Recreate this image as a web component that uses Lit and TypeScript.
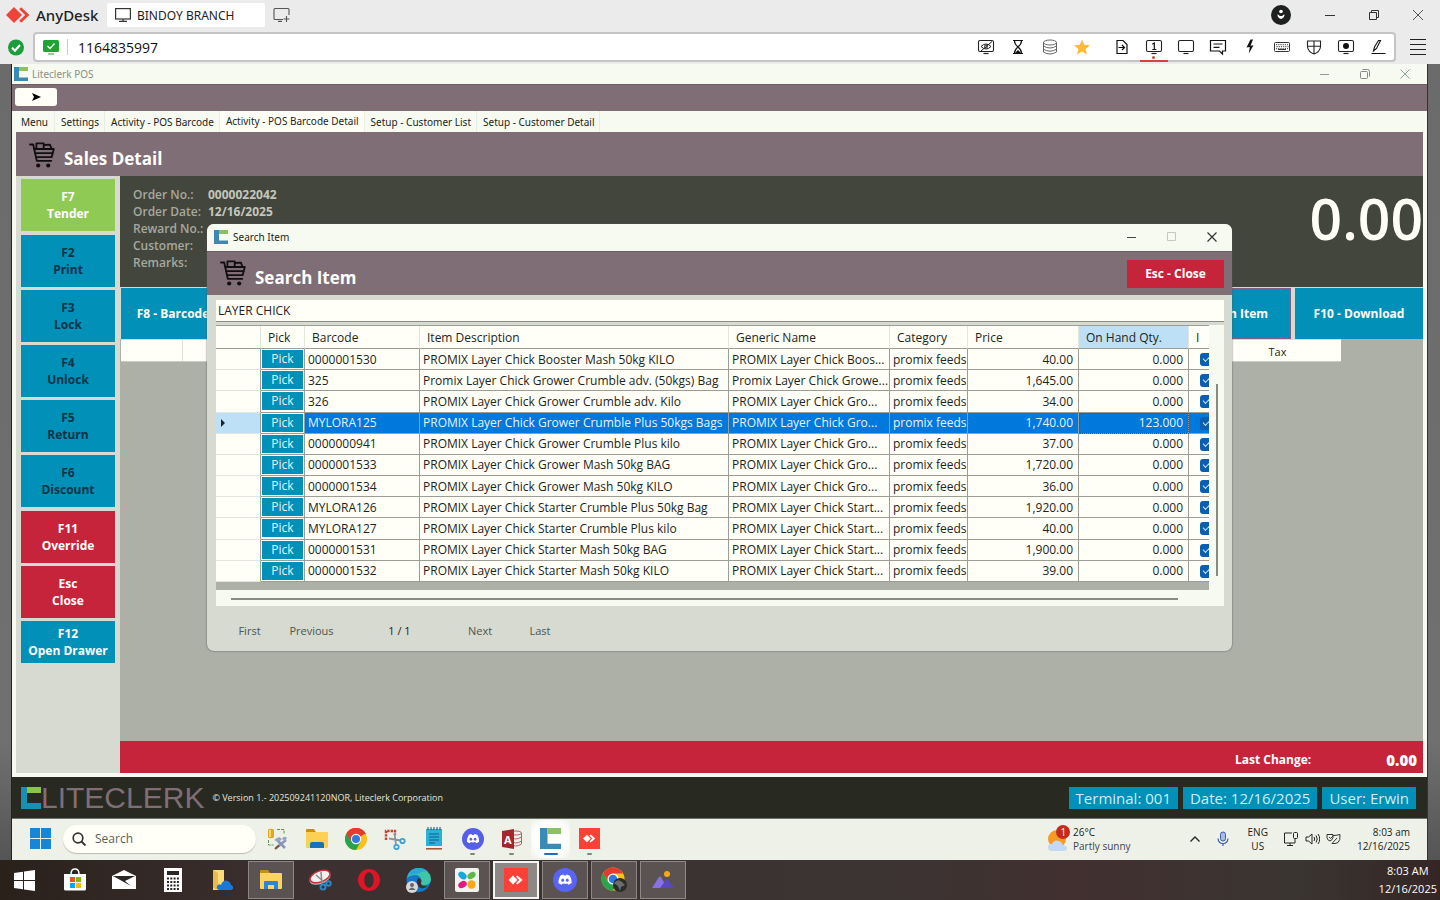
import { LitElement, html, css, svg, nothing } from "lit";
import type { TemplateResult } from "lit";
import { customElement, state } from "lit/decorators.js";
import { classMap } from "lit/directives/class-map.js";

const icon = (w: number, h: number, body: TemplateResult, box = `0 0 ${w} ${h}`) =>
  html`<svg width=${w} height=${h} viewBox=${box} fill="none" aria-hidden="true">${body}</svg>`;

/* ---------- shared marks ---------- */
const anydeskMark = icon(24, 18, svg`<path d="M8 1l8 8-8 8-8-8z" fill="#ef443b"/><path d="M13.2 3.2l2-2L23.4 9l-8.2 7.8-2-2L19.2 9z" fill="#ef443b"/>`);
const liteclerk = (s: number) => icon(s, s, svg`<path d="M0 0h5v14H0z" fill="#3b8ab4"/><path d="M5 0h9v4H5z" fill="#8dc063"/><path d="M0 10.5h14V14H0z" fill="#3b8ab4"/>`, "0 0 14 14");
const cart = icon(26, 27, svg`<g stroke="#120d0f" stroke-width="1.8" stroke-linejoin="round" stroke-linecap="round">
  <path d="M1 2.5h3.2l3.6 16.300h14.500"/><path d="M5.400 7h19.400l-2.200 8.200H7.300"/><path d="M6.500 11.200h17"/>
  <path d="M7.400 6.600V1.300h7.300v5.300M14.700 3l6.200-.4 1.600 4"/></g>
  <circle cx="9.200" cy="23.500" r="2.100" fill="#120d0f"/><circle cx="19.200" cy="23.500" r="2.100" fill="#120d0f"/>`);
const discord = (s: number, bg: string) => icon(s, s, svg`<circle cx="12" cy="12" r="12" fill=${bg}/>
  <path d="M7.2 7.7q1.6-.9 3.2-1.1l.5.9h2.2l.5-.9q1.600.2 3.200 1.100 2.200 3.400 1.900 7.300-1.600 1.300-3.500 1.700l-.8-1.300q-2.400.6-4.800 0l-.8 1.300q-1.900-.4-3.500-1.700-.3-3.900 2.100-7.300z" fill="#fff"/>
  <ellipse cx="9.700" cy="12.200" rx="1.400" ry="1.600" fill=${bg}/><ellipse cx="14.300" cy="12.200" rx="1.400" ry="1.600" fill=${bg}/>`, "0 0 24 24");
const chrome = (s: number) => icon(s, s, svg`<circle cx="12" cy="12" r="12" fill="#fbc116"/>
  <path d="M12 12L1.600 6A12 12 0 0 1 22.400 6z" fill="#e33b2e"/><path d="M1.600 6A12 12 0 0 0 12 24l5-9-5-3z" fill="#2ba24c"/>
  <path d="M12 6.500h10.700A12 12 0 0 0 1.600 6l5 8.500z" fill="#e33b2e"/><circle cx="12" cy="12" r="5.600" fill="#fff"/><circle cx="12" cy="12" r="4.400" fill="#3178e0"/>`, "0 0 24 24");
const anydeskTile = (s: number) => icon(s, s, svg`<path d="M0 0h24v24H0z" fill="#fb4136"/><path d="M9 7.600l4.400 4.400L9 16.400 4.600 12z" fill="#fff"/><path d="M12 8.800l1.400-1.400L18.600 12l-5.200 4.600-1.400-1.400 3.300-3.200z" fill="#fff"/>`, "0 0 24 24");
const folder = icon(24, 22, svg`<path d="M1 2q0-1 1-1h7l2 3H1z" fill="#c98e16"/><path d="M1 4h21q1 0 1 1v14q0 1-1 1H2q-1 0-1-1z" fill="#fcd464"/>
  <path d="M5 20v-7q0-1 1-1h12q1 0 1 1v7h-4v-4H9v4z" fill="#2c86d8"/>`);
const folderSolid = icon(24, 22, svg`<path d="M1 2q0-1 1-1h7l2 3H1z" fill="#c98e16"/><path d="M1 4h21q1 0 1 1v14q0 1-1 1H2q-1 0-1-1z" fill="#fcd055"/>
  <path d="M5 20v-4q0-2 2-2h10q2 0 2 2v4z" fill="#1673b8"/>`);

/* ---------- client toolbar ---------- */
const monitor = (inner: TemplateResult | typeof nothing) =>
  icon(18, 18, svg`<rect x="1.500" y="2.500" width="15" height="11" rx="1.500" stroke="#222" stroke-width="1.100"/><path d="M6.500 15.500h5" stroke="#222" stroke-width="1.200"/>${inner}`);
const toolsA: [string, TemplateResult][] = [
  ["Privacy mode", monitor(svg`<path d="M4 8.500q5-5 10 0-5 5-10 0zM4 13L15 3.500" stroke="#222"/><circle cx="9" cy="8.500" r="1.500" stroke="#222"/>`)],
  ["Session time", icon(18, 18, svg`<path d="M4 2.500h10M4 15.500h10M5.500 2.500q-.2 3.500 3.500 6.500-3.700 3-3.500 6.500M12.500 2.500q.2 3.500-3.500 6.500 3.700 3 3.500 6.500" stroke="#111" stroke-width="1.200"/><path d="M5.500 15.500L9 12l3.500 3.500z" fill="#111"/>`)],
  ["Bandwidth", icon(18, 18, svg`<g stroke="#666"><ellipse cx="9" cy="4.500" rx="6.500" ry="2.500"/><path d="M2.500 4.500v9.500q6.500 4 13 0V4.500M2.500 8q6.500 4 13 0M2.500 11.200q6.500 4 13 0"/></g>`)],
  ["Favorite", icon(18, 18, svg`<path d="M9 1.500l2.200 5.200 5.700.5-4.300 3.700 1.300 5.500L9 13.500l-4.900 2.900 1.300-5.500L1.100 7.200l5.700-.5z" fill="#fdbb2f"/>`)],
];
const toolsB: [string, TemplateResult][] = [
  ["File transfer", icon(18, 18, svg`<path d="M4 2.500h6l4 4v9H4z" stroke="#111" stroke-width="1.200"/><path d="M5.500 9.500h6M9 7l2.500 2.500L9 12" stroke="#111" stroke-width="1.200"/>`)],
  ["Display 1", monitor(svg`<path d="M7.300 6.300L9.300 5v6.500M7.300 11.500h4" stroke="#111" stroke-width="1.200"/>`)],
  ["Display", monitor(nothing)],
  ["Chat", icon(18, 18, svg`<path d="M1.500 2.500h15v10.500h-3v3l-3-3h-9z" stroke="#111" stroke-width="1.200"/><path d="M4.500 6h9M4.500 9.300h6" stroke="#111" stroke-width="1.200"/>`)],
  ["Actions", icon(18, 18, svg`<path d="M9.500 1.500L5.500 9.500l3.300-.6-1 6.600L12.500 7.300l-3 .4 2.500-6.200z" fill="#111"/>`)],
  ["Keyboard", icon(18, 18, svg`<rect x="1.500" y="4.500" width="15" height="9" rx="1" stroke="#333"/><path d="M3 6.700h12M3.500 8.700h12M3 10.700h12" stroke="#333" stroke-dasharray="1.200 1"/><path d="M5 11.500h8" stroke="#333"/>`)],
  ["Permissions", icon(18, 18, svg`<path d="M2.500 3h13v6q-.8 5-6.500 7-5.700-2-6.500-7zM9 3v13M2.500 8.200h13" stroke="#222" stroke-width="1.100"/>`)],
  ["Recording", monitor(svg`<circle cx="9" cy="8" r="3" fill="#111"/>`)],
  ["Whiteboard", icon(18, 18, svg`<path d="M2.500 15.500h14M4.500 13l1-4L9.500 2.500h2L7.500 10.500z" stroke="#111" stroke-width="1.100"/>`)],
];

/* ---------- data ---------- */
const rows: [string, string, string, string, string][] = [
  ["0000001530", "PROMIX Layer Chick Booster Mash 50kg KILO", "PROMIX Layer Chick Boos...", "40.00", "0.000"],
  ["325", "Promix Layer Chick Grower Crumble adv. (50kgs) Bag", "Promix Layer Chick Growe...", "1,645.00", "0.000"],
  ["326", "PROMIX Layer Chick Grower Crumble adv. Kilo", "PROMIX Layer Chick Gro...", "34.00", "0.000"],
  ["MYLORA125", "PROMIX Layer Chick Grower Crumble Plus 50kgs Bags", "PROMIX Layer Chick Gro...", "1,740.00", "123.000"],
  ["0000000941", "PROMIX Layer Chick Grower Crumble Plus kilo", "PROMIX Layer Chick Gro...", "37.00", "0.000"],
  ["0000001533", "PROMIX Layer Chick Grower Mash 50kg BAG", "PROMIX Layer Chick Gro...", "1,720.00", "0.000"],
  ["0000001534", "PROMIX Layer Chick Grower Mash 50kg KILO", "PROMIX Layer Chick Gro...", "36.00", "0.000"],
  ["MYLORA126", "PROMIX Layer Chick Starter Crumble Plus 50kg Bag", "PROMIX Layer Chick Start...", "1,920.00", "0.000"],
  ["MYLORA127", "PROMIX Layer Chick Starter Crumble Plus kilo", "PROMIX Layer Chick Start...", "40.00", "0.000"],
  ["0000001531", "PROMIX Layer Chick Starter Mash 50kg BAG", "PROMIX Layer Chick Start...", "1,900.00", "0.000"],
  ["0000001532", "PROMIX Layer Chick Starter Mash 50kg KILO", "PROMIX Layer Chick Start...", "39.00", "0.000"],
];

const fontBase = css`
  :host { font-family: "Open Sans", "Noto Sans", sans-serif; box-sizing: border-box; }
  *, *::before { box-sizing: border-box; }
  button { font: inherit; color: inherit; border: 0; padding: 0; background: none; display: flex; align-items: center; justify-content: center; }
  svg { display: block; flex: none; }
`;

@customElement("client-bar")
class ClientBar extends LitElement {
  static styles = [fontBase, css`
    :host { display: block; background: #ebebeb; color: #222; }
    .title { display: flex; align-items: center; height: 32px; padding: 0 0 2px 6px; }
    .brand { font-family: "Noto Sans", sans-serif; font-size: 15px; font-weight: 500; margin: 0 11px 0 6px; width: 60px; white-space: nowrap; }
    .title .tab { justify-content: flex-start; gap: 6px; width: 158px; height: 24px; padding-left: 8px; background: #fff; border-radius: 2px; font-family: "Noto Sans", sans-serif; font-size: 12px; white-space: nowrap; }
    .new { margin-left: 8px; }
    .user { margin-left: auto; }
    .win { display: flex; margin-left: 17px; }
    .win button { width: 44px; height: 30px; }
    .addr { display: flex; align-items: center; padding: 0 0 2px 8px; height: 32px; gap: 8px; }
    .box { flex: 1; display: flex; align-items: center; height: 30px; background: #fff; border: 2px solid #c4c4c4; border-radius: 4px; padding-left: 8px; }
    .sep { width: 1px; height: 16px; background: #ccc; margin: 0 6px 0 8px; }
    .box input { flex: 1; min-width: 0; border: 0; outline: 0; background: none; font: inherit; font-size: 14px; color: #111; padding: 0 4px; }
    .tools { display: flex; }
    .tools button { width: 32px; height: 26px; position: relative; }
    .gap { width: 8px; }
    .on::after { content: ""; position: absolute; left: 2px; right: 2px; bottom: -2px; height: 2px; background: #d9423c; }
    .on::before { content: ""; position: absolute; left: 14px; bottom: 1px; width: 3px; height: 3px; border-radius: 2px; background: #d9423c; }
    .menu { width: 28px; margin-right: 8px; }
  `];
  render() {
    return html`
      <header class="title">
        ${anydeskMark}<span class="brand">AnyDesk</span>
        <button class="tab">${icon(16, 16, svg`<rect x=".6" y="1.600" width="14.800" height="10.400" stroke="#333" stroke-width="1.200"/><path d="M4 14.400h8M8 12v2" stroke="#333" stroke-width="1.200"/>`)}BINDOY BRANCH</button>
        <button class="new" aria-label="New tab">${icon(17, 16, svg`<path d="M10 12.500H2q-1 0-1-1V2.500q0-1 1-1h13q1 0 1 1V8M5 14.400h4M13.500 9v6M10.500 12h6" stroke="#555" stroke-width="1.100"/>`)}</button>
        <button class="user" aria-label="Account">${icon(20, 20, svg`<circle cx="10" cy="10" r="10" fill="#1f2020"/><circle cx="10" cy="6.500" r="1.800" fill="#fff"/><path d="M6.500 9.500q1.300 0 1.600 1 1.900 1.200 3.800 0 .3-1 1.600-1 .2 3-3.500 4.500-3.700-1.500-3.500-4.500z" fill="#fff"/>`)}</button>
        <div class="win">
          <button aria-label="Minimize">${icon(12, 12, svg`<path d="M1 6.500h10" stroke="#333"/>`)}</button>
          <button aria-label="Restore">${icon(12, 12, svg`<path d="M1.500 3.500h7v7h-7zM3.500 3.500v-2h7v7h-2" stroke="#333"/>`)}</button>
          <button aria-label="Close">${icon(12, 12, svg`<path d="M1 1l10 10M11 1L1 11" stroke="#555"/>`)}</button>
        </div>
      </header>
      <div class="addr">
        ${icon(17, 17, svg`<circle cx="8" cy="8.500" r="8" fill="#1c9c3c"/><path d="M4 8.700l3 3 5-5.700" stroke="#fff" stroke-width="2.200"/>`)}
        <div class="box">
          ${icon(16, 15, svg`<rect width="16" height="12" rx="1.500" fill="#20a336"/><path d="M5 14h6" stroke="#20a336"/><path d="M4.500 6l2.500 2.500 4.500-5" stroke="#fff" stroke-width="1.300"/>`)}
          <span class="sep"></span>
          <input aria-label="Remote address" value="1164835997" />
          <div class="tools">
            ${toolsA.map(([n, i]) => html`<button aria-label=${n}>${i}</button>`)}
            <span class="gap"></span>
            ${toolsB.map(([n, i]) => html`<button aria-label=${n} class=${classMap({ on: n === "Display 1" })}>${i}</button>`)}
          </div>
        </div>
        <button class="menu" aria-label="Menu">${icon(16, 18, svg`<path d="M0 1.500h16M0 6.500h16M0 11.500h16M0 16.500h16" stroke="#222"/>`)}</button>
      </div>`;
  }
}

@customElement("search-dialog")
class SearchDialog extends LitElement {
  @state() current = 3;
  static styles = [fontBase, css`
    :host { display: block; background: #d6dad0; border-radius: 7px; overflow: hidden; box-shadow: 0 0 2px #555; color: #1c2420; font-size: 12px; }
    .bar { display: flex; align-items: center; height: 27px; background: #f6faf0; padding: 0 0 2px 7px; font-family: "Noto Sans", sans-serif; font-size: 10px; gap: 5px; }
    .win { display: flex; margin-left: auto; }
    .win button { width: 40px; height: 24px; }
    .head { display: flex; align-items: center; height: 44px; background: #7f6e75; padding: 0 8px 0 13px; border-top: 1px solid #6d5d64; }
    h2 { margin: 8px 0 0 9px; font-size: 17px; line-height: 24px; color: #fff; font-weight: 700; }
    .esc { margin-left: auto; width: 97px; height: 28px; background: #c5243a; color: #fff; font-weight: 700; }
    .body { padding: 5px 8px 0 9px; }
    .query { display: block; width: 100%; height: 22px; border: 0; border-bottom: 1px solid #8b8e85; outline: 0; background: #fffff8; font: inherit; color: #222; padding: 0 2px; margin-bottom: 3px; border-radius: 0; }
    .view { display: flex; background: #f6faf0; }
    .clip { flex: 1; min-width: 0; overflow: hidden; background: #acb0a6; padding-bottom: 8px; }
    table { width: calc(100% + 20px); height: 257px; border-spacing: 0; table-layout: fixed; background: #fffff8; border-top: 1px solid #9b9e95; }
    th { height: 23px; font-weight: 400; text-align: left; padding: 0 7px; border-right: 1px solid #e4e6dc; border-bottom: 1px solid #9b9e95; }
    td { padding: 1px 0 0 3px; border-right: 1px solid #9b9e95; border-bottom: 1px solid #9b9e95; white-space: nowrap; overflow: hidden; text-overflow: ellipsis; line-height: 18px; }
    td.num { text-align: right; padding-right: 5px; }
    td.lead { padding-left: 4px; border-bottom-color: #e4e6dc; }
    th.hot { background: #bde0f7; }
    td.pick { padding: 1px; }
    .pick button { width: 100%; height: 18px; background: #0090b8; color: #e4f6fa; }
    tr.sel td { background: #0078dc; color: #e8f4ff; }
    tr.sel td.lead { background: #bde0f7; }
    tr.sel td.pick { background: #fffff8; }
    tr.sel td.focus { outline: 1px dotted #6b4a2a; outline-offset: -1px; }
    input[type="checkbox"] { appearance: none; display: block; width: 13px; height: 13px; margin: 0 0 0 8px; border-radius: 3px; background: #0a5fb0; position: relative; }
    input[type="checkbox"]::before { content: ""; position: absolute; left: 3px; top: 3px; width: 7px; height: 4px; border: solid #cfe6fa; border-width: 0 0 1px 1px; transform: rotate(-45deg); }
    .vs { width: 15px; display: flex; justify-content: center; padding: 59px 0 14px; }
    .vs::before { content: ""; width: 2px; background: #868a7f; }
    .hs { height: 16px; background: #f6faf0; padding: 8px 46px 0 15px; }
    .hs::before { content: ""; display: block; height: 2px; background: #868a7f; }
    .pager { display: flex; align-items: center; height: 45px; padding: 5px 0 2px 22px; font-size: 11px; color: #4d5650; }
    .pager > * { text-align: center; }
    .pager .a { width: 41px; } .pager .b { width: 83px; } .pager .c { width: 93px; color: #1c2420; } .pager .d { width: 68px; } .pager .e { width: 52px; }
  `];
  render() {
    return html`
      <div class="bar">${liteclerk(14)}<span>Search Item</span>
        <div class="win">
          <button aria-label="Minimize">${icon(10, 10, svg`<path d="M0 5.500h9" stroke="#444"/>`)}</button>
          <button aria-label="Maximize">${icon(10, 10, svg`<path d="M.5.5h8v8h-8z" stroke="#c4c8be"/>`)}</button>
          <button aria-label="Close">${icon(10, 10, svg`<path d="M.5.5l9 9M9.500.5l-9 9" stroke="#333" stroke-width="1.200"/>`)}</button>
        </div>
      </div>
      <div class="head">${cart}<h2>Search Item</h2><button class="esc">Esc - Close</button></div>
      <div class="body">
        <input class="query" aria-label="Search" value="LAYER CHICK" />
        <div class="view">
          <div class="clip">
            <table>
              <colgroup><col style="width:45px"><col style="width:44px"><col style="width:115px"><col><col style="width:161px"><col style="width:78px"><col style="width:111px"><col style="width:110px"><col style="width:40px"></colgroup>
              <thead><tr><th></th><th>Pick</th><th>Barcode</th><th>Item Description</th><th>Generic Name</th><th>Category</th><th>Price</th><th class="hot">On Hand Qty.</th><th>I</th></tr></thead>
              <tbody>${rows.map((r, i) => html`
                <tr class=${classMap({ sel: i === this.current })} @click=${() => { this.current = i; }}>
                  <td class="lead">${i === this.current ? icon(6, 8, svg`<path d="M1 0l4 4-4 4z" fill="#222"/>`) : nothing}</td>
                  <td class="pick"><button>Pick</button></td>
                  <td>${r[0]}</td><td>${r[1]}</td><td>${r[2]}</td><td>promix feeds</td>
                  <td class="num">${r[3]}</td><td class="num focus">${r[4]}</td>
                  <td><input type="checkbox" checked aria-label="Inventory item" /></td>
                </tr>`)}</tbody>
            </table>
          </div>
          <div class="vs"></div>
        </div>
        <div class="hs"></div>
      </div>
      <div class="pager"><button class="a">First</button><button class="b">Previous</button><span class="c">1 / 1</span><button class="d">Next</button><button class="e">Last</button></div>`;
  }
}

const remoteApps: { name: string; art: TemplateResult; run?: boolean; on?: boolean }[] = [
  { name: "Database tools", art: icon(22, 22, svg`<path d="M1 1.500q3-1.500 6 0v8q-3 1.500-6 0z" fill="#e0a820"/><path d="M3 2v7" stroke="#fbe690" stroke-width="1.500"/><path d="M10 1.500h7v4M1.500 12v5h5" stroke="#5a9a50" stroke-dasharray="3 1"/><path d="M9 11l9 9M9 20l10-8" stroke="#8a94b8" stroke-width="2.500"/><path d="M7 12l5-3 3 2-3 3zM15 11q2-4 5-1l-2 3z" fill="#9aa4c4"/><path d="M8 21l4-3.500" stroke="#7a5a3a" stroke-width="2"/>`) },
  { name: "File Explorer", art: folderSolid },
  { name: "Chrome", art: chrome(22) },
  { name: "Snip", art: icon(22, 22, svg`<path d="M2 12V3h9v4" stroke="#c8402a" stroke-width="2.400" stroke-dasharray="2.400 1"/><path d="M5 10.500l12 2M10.500 5l1.500 12" stroke="#8a969c" stroke-width="1.800"/><circle cx="18.500" cy="13" r="2.200" stroke="#3ba0d8" stroke-width="1.800"/><circle cx="12.500" cy="19" r="2.200" stroke="#3ba0d8" stroke-width="1.800"/>`) },
  { name: "Notepad", art: icon(18, 23, svg`<path d="M1 2h16v17H1z" fill="#2bb0d8"/><path d="M1 19h16v2H1z" fill="#e8f0f0"/><path d="M1 21.800h16" stroke="#a05030" stroke-width="1.500"/><path d="M3 0v3M6 0v3M9 0v3M12 0v3M15 0v3" stroke="#1a4c68"/><path d="M4 7h10M4 10h10M4 13h10M4 16h6" stroke="#0a6088" stroke-width="1.200"/>`) },
  { name: "Discord", art: discord(22, "#5560e6"), run: true },
  { name: "Access", art: html`<svg width="22" height="22" viewBox="0 0 22 22" fill="none" aria-hidden="true"><ellipse cx="15" cy="5" rx="5.500" ry="2" stroke="#b8606a"/><path d="M9.500 5v11q5 4 11 0V5M9.500 9q5 4 11 0M9.500 13q5 4 11 0" stroke="#b8606a"/><path d="M1 3l12-2v20L1 19z" fill="#a4262c"/><text x="3" y="15.500" font-size="11" font-weight="700" fill="#fff">A</text></svg>`, run: true },
  { name: "Liteclerk", art: liteclerk(21), run: true, on: true },
  { name: "AnyDesk", art: anydeskTile(21), run: true },
];

@customElement("remote-taskbar")
class RemoteTaskbar extends LitElement {
  static styles = [fontBase, css`
    :host { display: flex; align-items: center; height: 42px; background: #eef1e8; border-top: 1px solid #6f726a; padding: 0 17px 2px 18px; color: #222; font-size: 10px; line-height: 14px; }
    .search { display: flex; align-items: center; gap: 9px; width: 193px; height: 28px; margin: 0 2px 0 12px; padding-left: 9px; background: #fffff8; border-radius: 14px; box-shadow: 0 1px 1px #b8bcb2; }
    .search input { width: 120px; border: 0; outline: 0; background: none; padding: 0; font: inherit; font-size: 12px; }
    .search input::placeholder { color: #5c605a; opacity: 1; }
    .app { width: 39px; height: 38px; position: relative; }
    .app.on { background: radial-gradient(#fff 60%, #eef1e8); }
    .app.run::after { content: ""; position: absolute; bottom: 3px; width: 5px; height: 2px; border-radius: 1px; background: #83867e; }
    .app.on::after { width: 14px; background: #1a70c0; }
    .weather { display: flex; align-items: center; gap: 2px; margin-left: auto; }
    .wt { color: #444; } .wt b { display: block; font-weight: 400; color: #222; }
    .up { margin-left: 58px; } .mic { margin-left: 15px; }
    .lang { margin: 0 15px 0 18px; text-align: center; }
    .sys { display: flex; align-items: center; gap: 6px; }
    .clock { text-align: right; margin-left: 16px; }
  `];
  render() {
    return html`
      <button aria-label="Start">${icon(21, 21, svg`<path d="M0 0h10v10H0zM11 0h10v10H11zM0 11h10v10H0zM11 11h10v10H11z" fill="#1687d8"/>`)}</button>
      <label class="search">${icon(14, 14, svg`<circle cx="6" cy="6" r="4.800" stroke="#333" stroke-width="1.700"/><path d="M9.500 9.500l4 4" stroke="#333" stroke-width="1.900"/>`)}<input aria-label="Search" placeholder="Search" /></label>
      ${remoteApps.map((a) => html`<button aria-label=${a.name} class=${classMap({ app: true, run: !!a.run, on: !!a.on })}>${a.art}</button>`)}
      <div class="weather">
        <svg width="24" height="28" viewBox="0 0 24 28" fill="none" aria-hidden="true"><circle cx="10" cy="14" r="9" fill="#f59a22"/><path d="M4 26q-4-1-3-5 2-3 4-2 2-5 7-3 3 1 4 4 5 1 4 4-1 2-3 2z" fill="#c4d8f6"/><circle cx="16" cy="7" r="7" fill="#c42b1c"/><text x="13.500" y="11" font-size="10" fill="#fff">1</text></svg>
        <span class="wt"><b>26°C</b>Partly sunny</span>
      </div>
      <button class="up" aria-label="Hidden icons">${icon(12, 8, svg`<path d="M1.500 6.500L6 2l4.500 4.500" stroke="#222" stroke-width="1.300"/>`)}</button>
      <button class="mic" aria-label="Microphone">${icon(14, 16, svg`<rect x="4.500" y="1" width="5" height="9" rx="2.500" fill="#a8bce8" stroke="#3a5ca8"/><path d="M2 7.500q.5 5 5 5t5-5M7 12.500V15" stroke="#3a5ca8" stroke-width="1.200"/>`)}</button>
      <div class="lang">ENG<br />US</div>
      <div class="sys">
        ${icon(16, 16, svg`<path d="M9 2H1.500v10H12V8M4 14.500h6M7 12v2.500" stroke="#222"/><rect x="10.500" y="1.500" width="4" height="6" rx="1" stroke="#222"/>`)}
        ${icon(15, 14, svg`<path d="M1 5h2.500L7 2v10L3.500 9H1zM9 5q1.500 2 0 4M11 3.500q2.500 3.500 0 7M13 2q3.500 5 0 10" stroke="#222"/>`)}
        ${icon(15, 14, svg`<path d="M8 3.500q3-.2 6-1 .5 6-2 8-3 1.500-6 1l5-5.500M1 2.500h6v3q-.5 2.500-3 3.500-3-1-3-3.500zM3 5l1.500 1.500L8 3" stroke="#333" stroke-linejoin="round"/>`)}
      </div>
      <div class="clock">8:03 am<br />12/16/2025</div>`;
  }
}

const sideGroups: [string, string, string][][] = [
  [["F7", "Tender", "green"]],
  [["F2", "Print", "off"], ["F3", "Lock", "off"], ["F4", "Unlock", "off"], ["F5", "Return", "off"], ["F6", "Discount", "off"]],
  [["F11", "Override", "red"], ["Esc", "Close", "red"], ["F12", "Open Drawer", "short"]],
];
const tabs = ["Menu", "Settings", "Activity - POS Barcode", "Activity - POS Barcode Detail", "Setup - Customer List", "Setup - Customer Detail"];

@customElement("pos-window")
class PosWindow extends LitElement {
  static styles = [fontBase, css`
    :host { display: flex; flex-direction: column; position: relative; background: #f6faf0; color: #1c2420; border-left: 1px solid #222; border-right: 1px solid #333; }
    .bar { display: flex; align-items: center; height: 20px; padding-left: 2px; gap: 4px; font-family: "Noto Sans", sans-serif; font-size: 10px; color: #8b8f88; }
    .win { display: flex; margin-left: auto; margin-right: 2px; }
    .win button { width: 40px; height: 18px; }
    .strip { height: 27px; background: #7f6e75; border-top: 1px solid #6d5d64; padding: 3px; }
    .go { width: 42px; height: 18px; background: #fffff8; border-radius: 3px; }
    nav { display: flex; height: 21px; padding-left: 2px; font-family: "Noto Sans", sans-serif; font-size: 10px; }
    nav button { padding: 1px 5px 0 6px; min-width: 41px; border-right: 1px solid #e8ece2; white-space: nowrap; }
    nav .on { background: #fffff8; padding-bottom: 3px; }
    .page { flex: 1; display: flex; flex-direction: column; margin: 0 4px 4px 4px; min-height: 0; }
    .head { display: flex; align-items: center; height: 44px; background: #7f6e75; padding: 2px 0 0 13px; }
    h1 { margin: 7px 0 0 9px; font-size: 17px; line-height: 24px; color: #fff; font-weight: 700; }
    .work { flex: 1; display: flex; min-height: 0; }
    aside { width: 104px; background: #d6dad0; padding: 3px 5px; display: flex; flex-direction: column; gap: 4px; }
    .grp { display: flex; flex-direction: column; gap: 3px; }
    .key { height: 52px; flex-direction: column; background: #0090b8; color: #fff; font-size: 12px; font-weight: 700; line-height: 17px; }
    .green { background: #8fcb54; } .red { background: #c5243a; } .off { color: #0a3447; } .short { height: 42px; }
    main { flex: 1; display: flex; flex-direction: column; background: #acb0a6; min-width: 0; }
    .order { height: 111px; background: #43463c; display: flex; justify-content: space-between; padding: 10px 0 0 13px; color: #a6a89f; }
    dl { display: grid; grid-template-columns: 75px auto; align-content: start; margin: 0; font-size: 12px; line-height: 17px; font-weight: 600; }
    dt { white-space: nowrap; } dd { margin: 0; color: #c4c6bd; font-weight: 700; }
    .total { color: #fffff8; font-size: 57px; line-height: 64px; font-weight: 600; }
    .acts { display: flex; justify-content: space-between; height: 52px; background: #d6dad0; padding-left: 1px; border-top: 1px solid #d6dad0; }
    .acts button { background: #0090b8; color: #fff; font-size: 12px; font-weight: 700; width: 128px; white-space: nowrap; }
    .acts .first { width: 104px; }
    .acts .wide { margin-left: auto; margin-right: 4px; width: 140px; border: 1px solid #7f5f86; border-right-width: 2px; }
    .cols { display: flex; height: 23px; margin: 0 82px 0 1px; background: #fffff8; font-size: 11px; line-height: 24px; border-top: 1px solid #d6dad0; border-bottom: 1px solid #c8ccc2; }
    .cols i { width: 62px; border-right: 1px solid #e0e2d8; } .cols span { margin-left: auto; width: 127px; text-align: center; }
    .change { margin-top: auto; display: flex; justify-content: flex-end; align-items: center; gap: 75px; height: 32px; padding: 5px 6px 0 0; background: #c5243a; color: #fff; font-weight: 700; font-size: 12px; }
    .change b { font-size: 15px; }
    footer { display: flex; align-items: center; height: 41px; background: #282a22; padding: 0 11px 0 9px; color: #e4e6dc; font-size: 9px; }
    .logo { font: 30px "Liberation Sans", sans-serif; color: #7f6e75; margin-right: 8px; }
    .tags { display: flex; gap: 5px; margin-left: auto; }
    .tags span { background: #0090b8; color: #cdeff5; font-size: 15px; line-height: 22px; padding: 0 7px; }
    .dialog { position: absolute; left: 195px; right: 195px; top: 160px; }
  `];
  render() {
    return html`
      <div class="bar">${liteclerk(14)}<span>Liteclerk POS</span>
        <div class="win">
          <button aria-label="Minimize">${icon(10, 10, svg`<path d="M0 5.500h9" stroke="#999"/>`)}</button>
          <button aria-label="Restore">${icon(10, 10, svg`<rect x=".5" y="2.500" width="7" height="7" rx="1" stroke="#888"/><path d="M2.500.5h5q2 0 2 2v5" stroke="#888"/>`)}</button>
          <button aria-label="Close">${icon(10, 10, svg`<path d="M.5.5l9 9M9.500.5l-9 9" stroke="#8fa0a0"/>`)}</button>
        </div>
      </div>
      <div class="strip"><button class="go" aria-label="Expand">${icon(9, 8, svg`<path d="M0 0l9 4-9 4 2-4z" fill="#000"/>`)}</button></div>
      <nav>${tabs.map((t, i) => html`<button class=${classMap({ on: i === 3 })}>${t}</button>`)}</nav>
      <div class="page">
        <div class="head">${cart}<h1>Sales Detail</h1></div>
        <div class="work">
          <aside>${sideGroups.map((g) => html`<div class="grp">${g.map(([k, t, c]) => html`<button class="key ${c}"><span>${k}</span><span>${t}</span></button>`)}</div>`)}</aside>
          <main>
            <section class="order">
              <dl><dt>Order No.:</dt><dd>0000022042</dd><dt>Order Date:</dt><dd>12/16/2025</dd><dt>Reward No.:</dt><dd></dd><dt>Customer:</dt><dd></dd><dt>Remarks:</dt><dd></dd></dl>
              <div class="total">0.00</div>
            </section>
            <div class="acts"><button class="first">F8 - Barcode</button><button class="wide">F9 - Search Item</button><button>F10 - Download</button></div>
            <div class="cols"><i></i><span>Tax</span></div>
            <div class="change"><span>Last Change:</span><b>0.00</b></div>
          </main>
        </div>
      </div>
      <footer>
        ${icon(20, 22, svg`<path d="M0 0h6v22H0z" fill="#1790b4"/><path d="M6 0h14v6H6z" fill="#8cc63e"/><path d="M0 16h20v6H0z" fill="#1790b4"/>`)}
        <span class="logo">LITECLERK</span><span>© Version 1.- 202509241120NOR, Liteclerk Corporation</span>
        <div class="tags"><span>Terminal: 001</span><span>Date: 12/16/2025</span><span>User: Erwin</span></div>
      </footer>
      <remote-taskbar></remote-taskbar>
      <search-dialog class="dialog"></search-dialog>`;
  }
}

const hostApps: { name: string; art: TemplateResult; s?: string }[] = [
  { name: "Store", art: icon(24, 24, svg`<path d="M1 6h22v15q0 1.500-1.500 1.500h-19Q1 22.500 1 21z" fill="#fff"/><path d="M8 6q0-5 4-5t4 5" stroke="#fff" stroke-width="1.500"/><path d="M7 9h5v5H7z" fill="#f25022"/><path d="M13 9h5v5h-5z" fill="#7fba00"/><path d="M7 15h5v5H7z" fill="#00a4ef"/><path d="M13 15h5v5h-5z" fill="#ffb900"/>`) },
  { name: "Mail", art: icon(24, 20, svg`<path d="M0 6l12-6 12 6v13H0z" fill="#fff"/><path d="M1 6h22l-10 5 6 5z" fill="#2c2624"/>`) },
  { name: "Calculator", art: icon(18, 24, svg`<path d="M0 0h18v24H0z" fill="#fff"/><path d="M3 3h12v4H3z" fill="#2c2624"/><path d="M3 10.500h12M3 14h12M3 17.500h12M3 21h12" stroke="#2c2624" stroke-width="2" stroke-dasharray="2 1.300"/>`) },
  { name: "OneDrive", art: icon(22, 22, svg`<path d="M2 1h11v20H2z" fill="#fcdc78"/><path d="M2 1l5 3v17l-5-2z" fill="#e8bc48"/><path d="M8 21q-3-1-2-4 2-3 4-1 2-6 7-4 3 2 3 4 3 1 2 4l-2 1z" fill="#1a78d8"/>`) },
  { name: "File Explorer", art: folder, s: "open" },
  { name: "Snipping Tool", art: icon(24, 22, svg`<ellipse cx="12" cy="9" rx="11" ry="6" transform="rotate(-20 12 9)" fill="#b8b0b0"/><ellipse cx="12" cy="7.500" rx="10.500" ry="5.500" transform="rotate(-20 12 7.500)" fill="#f4f0f0" stroke="#c43038" stroke-width="1.500"/><path d="M8 6l9 8M13 3l1 12" stroke="#888" stroke-width="1.500"/><circle cx="15" cy="18" r="2.500" stroke="#2a88c8" stroke-width="2"/><circle cx="20.500" cy="14.500" r="2.200" stroke="#2a88c8" stroke-width="2"/>`) },
  { name: "Opera", art: icon(22, 22, svg`<circle cx="11" cy="11" r="11" fill="#e01426"/><ellipse cx="11" cy="11" rx="4.800" ry="7.800" fill="#3b302f"/>`) },
  { name: "Edge", art: icon(25, 25, svg`<circle cx="12.500" cy="12" r="12" fill="#1577c8"/><path d="M1 10Q3 0 13 0q11 1 12 11 0 6-7 6-4 0-3-3 1-6-5-7-6 0-9 3z" fill="#3cc8a4"/><path d="M2 8Q4 0 13 0q6 0 9 4-5-2-10 2-6 0-10 2z" fill="#2ba8d8"/><path d="M12 10q5 1 3 5 0 4 7 3-5 4-9 1t-1-9z" fill="#3b302f"/><circle cx="6" cy="19" r="6" fill="#d8d8d8"/><circle cx="6" cy="17" r="2" fill="#666"/><path d="M2.500 22q3.500-5 7 0z" fill="#666"/>`) },
  { name: "Photos grid", art: icon(24, 24, svg`<rect width="24" height="24" rx="2" fill="#f2f2f0"/><ellipse cx="7.500" cy="7.500" rx="4.500" ry="3.300" transform="rotate(40 7.500 7.500)" fill="#18a8e0"/><ellipse cx="16.500" cy="7.500" rx="4.500" ry="3" transform="rotate(-35 16.500 7.500)" fill="#5cb848"/><ellipse cx="7.500" cy="16.500" rx="4.500" ry="3.300" transform="rotate(-30 7.500 16.500)" fill="#e01c84"/><ellipse cx="16.500" cy="16.500" rx="4" ry="4.200" fill="#f8a81c"/>`), s: "open" },
  { name: "AnyDesk", art: anydeskTile(24), s: "open front" },
  { name: "Discord", art: discord(24, "#5865f2"), s: "open" },
  { name: "Chrome", art: html`<svg width="26" height="26" viewBox="0 0 26 26" fill="none" aria-hidden="true"><circle cx="12" cy="12" r="11.500" fill="#fbc116"/><path d="M12 6.500h10A11.500 11.500 0 0 0 2 6l5 8.500z" fill="#e33b2e"/><path d="M2 6a11.500 11.500 0 0 0 10 17.500l4-8.500H7z" fill="#2ba24c"/><circle cx="12" cy="12" r="5.500" fill="#fff"/><circle cx="12" cy="12" r="4.300" fill="#3178e0"/><circle cx="19" cy="18" r="7" fill="#2c2c2c"/><path d="M13 16q4-5 8-1l3 3-4 2-1 4-2-5z" fill="#6c6c6c"/></svg>`, s: "open" },
  { name: "Photos", art: icon(24, 20, svg`<path d="M1 18L8 7q1-1 2 0l6 11z" fill="#8a70e8"/><path d="M9 18l6-8q1-1 2 0l6 8z" fill="#5a48c0"/><circle cx="16" cy="4" r="3" fill="#f8a81c"/>`), s: "open" },
];

@customElement("app-root")
class AppRoot extends LitElement {
  static styles = [fontBase, css`
    :host { display: flex; flex-direction: column; height: 100vh; min-height: 860px; overflow: hidden; }
    .screen { flex: 1; display: flex; padding: 0 12px 0 11px; background: linear-gradient(#6b6b6b, #707070 85%, #555); min-height: 0; }
    pos-window { flex: 1; min-width: 0; }
    .task { display: flex; align-items: center; gap: 3px; height: 40px; background: linear-gradient(90deg, #2a211b, #3c3030 20%, #3b3433 60%, #41302f 75%, #3a3532 90%, #352624); color: #fff; font-size: 11px; line-height: 18px; padding-right: 3px; }
    .task button { width: 46px; height: 38px; }
    .task .start { width: 49px; }
    .task .open { background: #5b5252; border: 1px solid #8d8686; }
    .task .front { background: #8d8786; border: 2px solid #f4f4f4; }
    .time { margin-left: auto; text-align: center; }
  `];
  render() {
    return html`
      <client-bar></client-bar>
      <div class="screen"><pos-window></pos-window></div>
      <div class="task">
        <button class="start" aria-label="Start">${icon(21, 21, svg`<path d="M0 3l9-1.300v8.300H0zM10 1.500L21 0v10H10zM0 11h9v8.300L0 18zM10 11h11v10l-11-1.500z" fill="#fff"/>`)}</button>
        ${hostApps.map((a) => html`<button class=${a.s ?? ""} aria-label=${a.name}>${a.art}</button>`)}
        <div class="time">8:03 AM<br />12/16/2025</div>
      </div>`;
  }
}
